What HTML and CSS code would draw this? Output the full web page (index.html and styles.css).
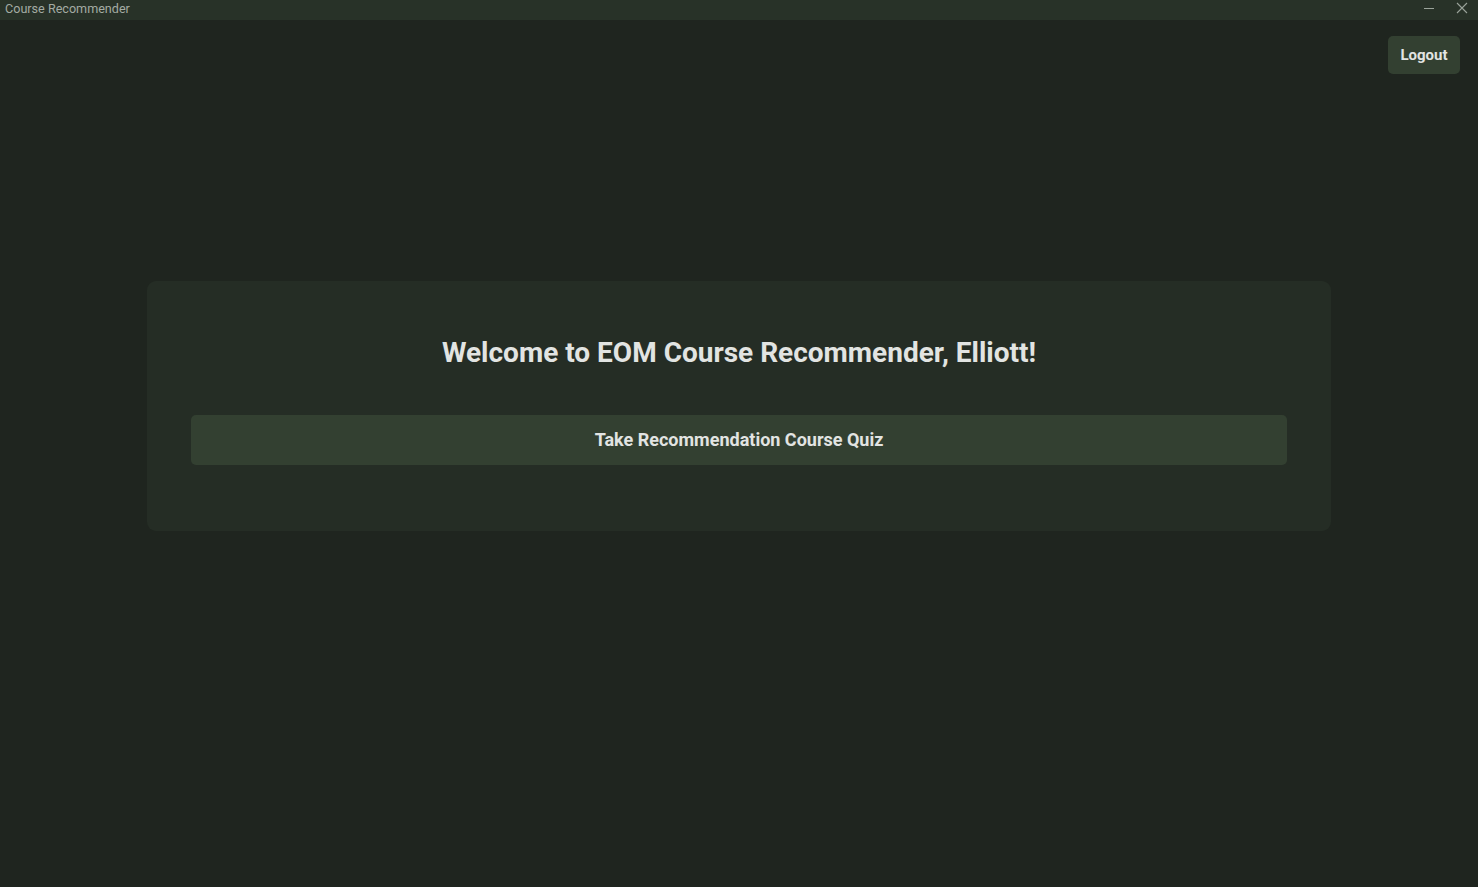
FILE: index.html
```html
<!DOCTYPE html>
<html>
<head>
<meta charset="utf-8">
<title>Course Recommender</title>
<link rel="stylesheet" href="styles.css">
</head>
<body>
<div class="titlebar">
  <span class="titlebar-title">Course Recommender</span>
  <div class="titlebar-controls">
    <span class="ctl ctl-min"><svg width="12" height="12" viewBox="0 0 12 12"><path d="M1 6.5h10" stroke="#9aa39a" stroke-width="1"/></svg></span>
    <span class="ctl ctl-close"><svg width="12" height="12" viewBox="0 0 12 12"><path d="M1 1L11 11M11 1L1 11" stroke="#9aa39a" stroke-width="1.1"/></svg></span>
  </div>
</div>
<div class="app">
  <div class="topbar">
    <button class="logout">Logout</button>
  </div>
  <div class="content">
    <div class="card">
      <h1 class="welcome">Welcome to EOM Course Recommender, Elliott!</h1>
      <button class="quiz">Take Recommendation Course Quiz</button>
    </div>
  </div>
</div>
</body>
</html>
```
FILE: styles.css
```css
html, body {
  margin: 0;
  padding: 0;
  height: 100%;
}
body {
  background: #1f251f;
  font-family: Roboto, "Liberation Sans", sans-serif;
  display: flex;
  flex-direction: column;
}
.titlebar {
  height: 20px;
  background: #283228;
  display: flex;
  align-items: center;
  justify-content: space-between;
  padding: 0 0 0 5px;
}
.titlebar-title {
  color: #a3aba3;
  font-size: 12.6px;
  line-height: 16px;
  margin-top: -3px;
}
.titlebar-controls {
  display: flex;
  align-items: center;
  height: 20px;
}
.ctl {
  display: flex;
  height: 20px;
  align-items: center;
  justify-content: center;
}
.ctl-min { width: 34px; margin-top: -5px; }
.ctl-close { width: 32px; margin-top: -4px; }
.app {
  flex: 1;
  display: flex;
  flex-direction: column;
}
.topbar {
  display: flex;
  justify-content: flex-end;
  padding: 16px 18px 0 0;
}
.logout {
  width: 72px;
  height: 38px;
  background: #334031;
  color: #e2e4e2;
  border: none;
  border-radius: 5px;
  font-family: Roboto, "Liberation Sans", sans-serif;
  font-weight: 700;
  font-size: 15px;
  cursor: pointer;
}
.content {
  display: flex;
  justify-content: center;
  padding-top: 207px;
}
.card {
  width: 1184px;
  height: 250px;
  box-sizing: border-box;
  padding: 51px 44px 0 44px;
  background: #252d25;
  border-radius: 9px;
  display: flex;
  flex-direction: column;
  align-items: center;
}
.welcome {
  margin: 0;
  color: #e2e4e2;
  font-size: 28px;
  font-weight: 700;
  line-height: 41px;
}
.quiz {
  margin-top: 42px;
  width: 100%;
  height: 50px;
  padding: 0 0 2px 0;
  background: #334031;
  color: #e2e4e2;
  border: none;
  border-radius: 5px;
  font-family: Roboto, "Liberation Sans", sans-serif;
  font-weight: 700;
  font-size: 18px;
  cursor: pointer;
}
```
